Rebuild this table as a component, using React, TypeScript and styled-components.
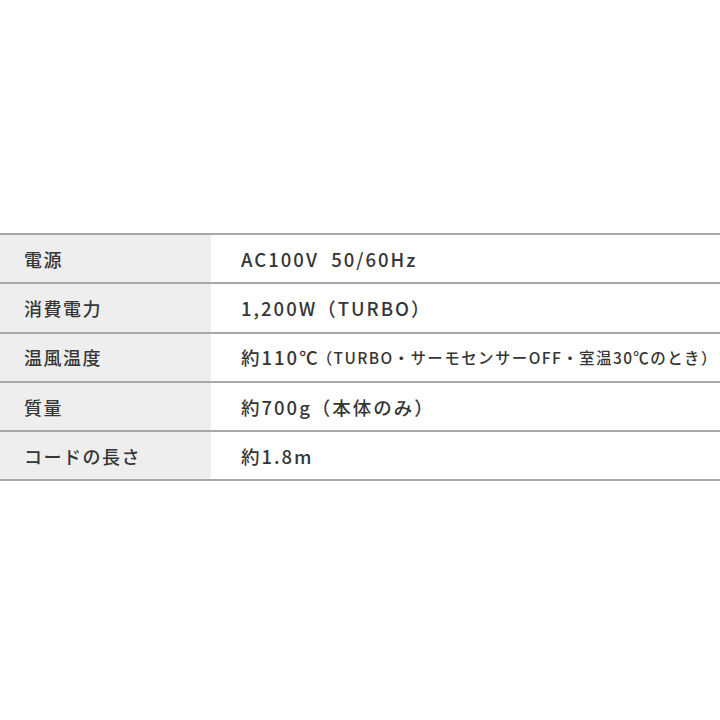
import styled, { createGlobalStyle } from "styled-components"

const GlobalStyle = createGlobalStyle`
  html, body {
    margin: 0;
    padding: 0;
    background: #ffffff;
  }
  body {
    font-family: "Noto Sans CJK JP", "Noto Sans", sans-serif;
    color: #333333;
  }
`

interface Spec {
  label: string
  value: string
  note?: string
}

const specs: Spec[] = [
  { label: "電源", value: "AC100V\u00a0\u00a050/60Hz" },
  { label: "消費電力", value: "1,200W（TURBO）" },
  { label: "温風温度", value: "約110℃", note: "（TURBO・サーモセンサーOFF・室温30℃のとき）" },
  { label: "質量", value: "約700g（本体のみ）" },
  { label: "コードの長さ", value: "約1.8m" },
]

function App() {
  return (
    <>
      <GlobalStyle />
      <Page>
        <SpecTable>
          {specs.map((spec) => (
            <Row key={spec.label}>
              <Label>{spec.label}</Label>
              <Value>
                {spec.value}
                {spec.note && <Note>{spec.note}</Note>}
              </Value>
            </Row>
          ))}
        </SpecTable>
      </Page>
    </>
  )
}

const Page = styled.div`
  width: 720px;
  height: 720px;
  padding-top: 233px;
  box-sizing: border-box;
  background: #ffffff;
  overflow: hidden;
`

const SpecTable = styled.div`
  display: flex;
  flex-direction: column;
  border-top: 2px solid #a8a8a8;
`

const Row = styled.div`
  display: grid;
  grid-template-columns: 211px 1fr;
  height: 47.3px;
  border-bottom: 2px solid #a8a8a8;
`

const Label = styled.div`
  display: flex;
  align-items: center;
  padding-left: 24px;
  background: #eeeeee;
  font-size: 18px;
  font-weight: 500;
  letter-spacing: 1.5px;
  color: #363636;
`

const Value = styled.div`
  display: flex;
  align-items: center;
  padding-left: 30px;
  font-size: 18.5px;
  font-weight: 500;
  letter-spacing: 2px;
  white-space: nowrap;
  color: #363636;
`

const Note = styled.span`
  font-size: 15.5px;
  letter-spacing: 1.4px;
  margin-left: -3px;
`

export default App
